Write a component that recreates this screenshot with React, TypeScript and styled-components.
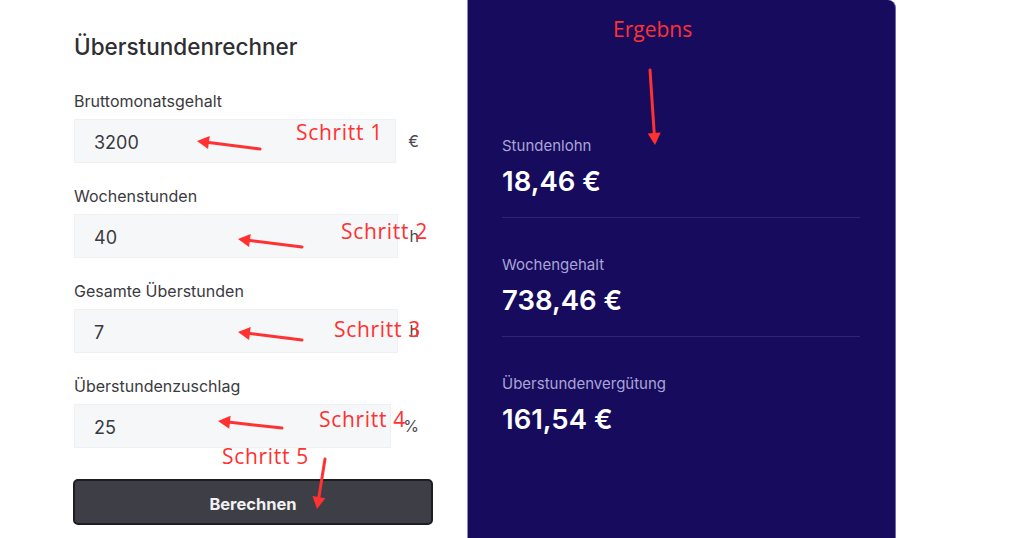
import React from "react";
import styled, { createGlobalStyle } from "styled-components";

const GlobalStyle = createGlobalStyle`
  html, body {
    margin: 0;
    padding: 0;
    background: #ffffff;
  }
  body {
    font-family: Inter, "Noto Sans", sans-serif;
    overflow: hidden;
  }
`;

interface Field {
  label: string;
  value: string;
  unit: string;
}

interface Result {
  label: string;
  value: string;
}

interface Note {
  text: string;
  x: number;
  y: number;
  step?: boolean;
}

type Point = [number, number];

const fields: Field[] = [
  { label: "Bruttomonatsgehalt", value: "3200", unit: "€" },
  { label: "Wochenstunden", value: "40", unit: "h" },
  { label: "Gesamte Überstunden", value: "7", unit: "h" },
  { label: "Überstundenzuschlag", value: "25", unit: "%" },
];

const results: Result[] = [
  { label: "Stundenlohn", value: "18,46 €" },
  { label: "Wochengehalt", value: "738,46 €" },
  { label: "Überstundenvergütung", value: "161,54 €" },
];

const notes: Note[] = [
  { text: "Ergebns", x: 613, y: 19 },
  { text: "Schritt 1", x: 296, y: 122, step: true },
  { text: "Schritt 2", x: 341, y: 221, step: true },
  { text: "Schritt 3", x: 334, y: 319, step: true },
  { text: "Schritt 4", x: 319, y: 409, step: true },
  { text: "Schritt 5", x: 222, y: 446, step: true },
];

const arrows: [Point, Point][] = [
  [[650, 70], [655, 145]],
  [[260, 149], [197, 141]],
  [[302, 247], [238, 239]],
  [[302, 340], [238, 332]],
  [[282, 428], [218, 421]],
  [[325, 459], [317, 509]],
];

// shaft end and head triangle for an arrow from tail to tip
const arrowGeometry = (tail: Point, tip: Point) => {
  const dx = tip[0] - tail[0];
  const dy = tip[1] - tail[1];
  const len = Math.hypot(dx, dy);
  const ux = dx / len;
  const uy = dy / len;
  const headLen = 12;
  const headHalf = 6.5;
  const bx = tip[0] - ux * headLen;
  const by = tip[1] - uy * headLen;
  const head = [
    `${tip[0]},${tip[1]}`,
    `${bx - uy * headHalf},${by + ux * headHalf}`,
    `${bx + uy * headHalf},${by - ux * headHalf}`,
  ].join(" ");
  return { shaftEnd: [bx + ux * 2, by + uy * 2] as Point, head };
};

const App: React.FC = () => {
  return (
    <Page>
      <GlobalStyle />
      <FormColumn>
        <Title>Überstundenrechner</Title>
        {fields.map((f) => (
          <FieldGroup key={f.label}>
            <Label>{f.label}</Label>
            <InputRow>
              <Input value={f.value} readOnly />
              <Unit>{f.unit}</Unit>
            </InputRow>
          </FieldGroup>
        ))}
        <Button type="button">Berechnen</Button>
      </FormColumn>

      <ResultPanel>
        {results.map((r, i) => (
          <ResultBlock key={r.label} $last={i === results.length - 1}>
            <ResultLabel>{r.label}</ResultLabel>
            <ResultValue>{r.value}</ResultValue>
          </ResultBlock>
        ))}
      </ResultPanel>

      <Annotations>
        <svg width="1024" height="538" viewBox="0 0 1024 538">
          {arrows.map(([tail, tip], i) => {
            const { shaftEnd, head } = arrowGeometry(tail, tip);
            return (
              <g key={i}>
                <line
                  x1={tail[0]}
                  y1={tail[1]}
                  x2={shaftEnd[0]}
                  y2={shaftEnd[1]}
                  stroke="#ff3131"
                  strokeWidth={3}
                  strokeLinecap="round"
                />
                <polygon points={head} fill="#ff3131" />
              </g>
            );
          })}
        </svg>
        {notes.map((n) => (
          <NoteText key={n.text} $step={n.step} style={{ left: n.x, top: n.y }}>
            {n.text}
          </NoteText>
        ))}
      </Annotations>
    </Page>
  );
};

export default App;

const Page = styled.div`
  position: relative;
  display: flex;
  width: 1024px;
  height: 538px;
  overflow: hidden;
`;

const FormColumn = styled.div`
  box-sizing: border-box;
  width: 467px;
  padding: 32px 35px 0 74px;
  display: flex;
  flex-direction: column;
`;

const Title = styled.h1`
  margin: 0 0 29px;
  font-size: 22.5px;
  line-height: 30px;
  font-weight: 500;
  color: #2e2e33;
`;

const FieldGroup = styled.div`
  display: flex;
  flex-direction: column;
  margin-bottom: 23px;

  &:last-of-type {
    margin-bottom: 31px;
  }
`;

const Label = styled.label`
  font-size: 16px;
  line-height: 20px;
  color: #3a3a40;
  margin-bottom: 8px;
`;

const InputRow = styled.div`
  display: flex;
  align-items: center;
  gap: 12px;
  padding-right: 13px;
`;

const Input = styled.input`
  flex: 1;
  min-width: 0;
  box-sizing: border-box;
  height: 44px;
  padding: 2px 19px 0;
  border: 1px solid #eff0f2;
  background: #f6f7f9;
  font-family: Inter, "Noto Sans", sans-serif;
  font-size: 18px;
  color: #3a3a40;
  outline: none;
`;

const Unit = styled.span`
  font-size: 16px;
  color: #4a4a50;
`;

const Button = styled.button`
  box-sizing: border-box;
  width: 360px;
  height: 46px;
  margin-left: -1px;
  padding-top: 5px;
  border: 2px solid #1d1d22;
  border-radius: 5px;
  background: #3e3e46;
  color: #f1f1f3;
  font-family: Inter, "Noto Sans", sans-serif;
  font-size: 16.5px;
  font-weight: 700;
  cursor: pointer;
`;

const ResultPanel = styled.div`
  box-sizing: border-box;
  width: 429px;
  height: 538px;
  padding: 137px 35px 0 34px;
  background: #170b5e;
  border-left: 1px solid #8c88c4;
  border-right: 1px solid #6e69ad;
  border-top-right-radius: 8px;
  display: flex;
  flex-direction: column;
`;

const ResultBlock = styled.div<{ $last?: boolean }>`
  display: flex;
  flex-direction: column;
  padding-bottom: ${(p) => (p.$last ? 0 : 20)}px;
  margin-bottom: ${(p) => (p.$last ? 0 : 38)}px;
  border-bottom: ${(p) => (p.$last ? "none" : "1px solid #2d2579")};
`;

const ResultLabel = styled.span`
  font-size: 15px;
  line-height: 18px;
  color: #aaa5d6;
  margin-bottom: 10px;
`;

const ResultValue = styled.span`
  font-size: 27.5px;
  line-height: 32px;
  font-weight: 600;
  color: #ffffff;
`;

const Annotations = styled.div`
  position: absolute;
  inset: 0;
  pointer-events: none;

  svg {
    position: absolute;
    left: 0;
    top: 0;
  }
`;

const NoteText = styled.span<{ $step?: boolean }>`
  position: absolute;
  font-family: "Open Sans", "Noto Sans", sans-serif;
  font-size: 21px;
  line-height: 1;
  letter-spacing: ${(p) => (p.$step ? "0.7px" : "0")};
  color: #ff3131;
  white-space: nowrap;
`;
